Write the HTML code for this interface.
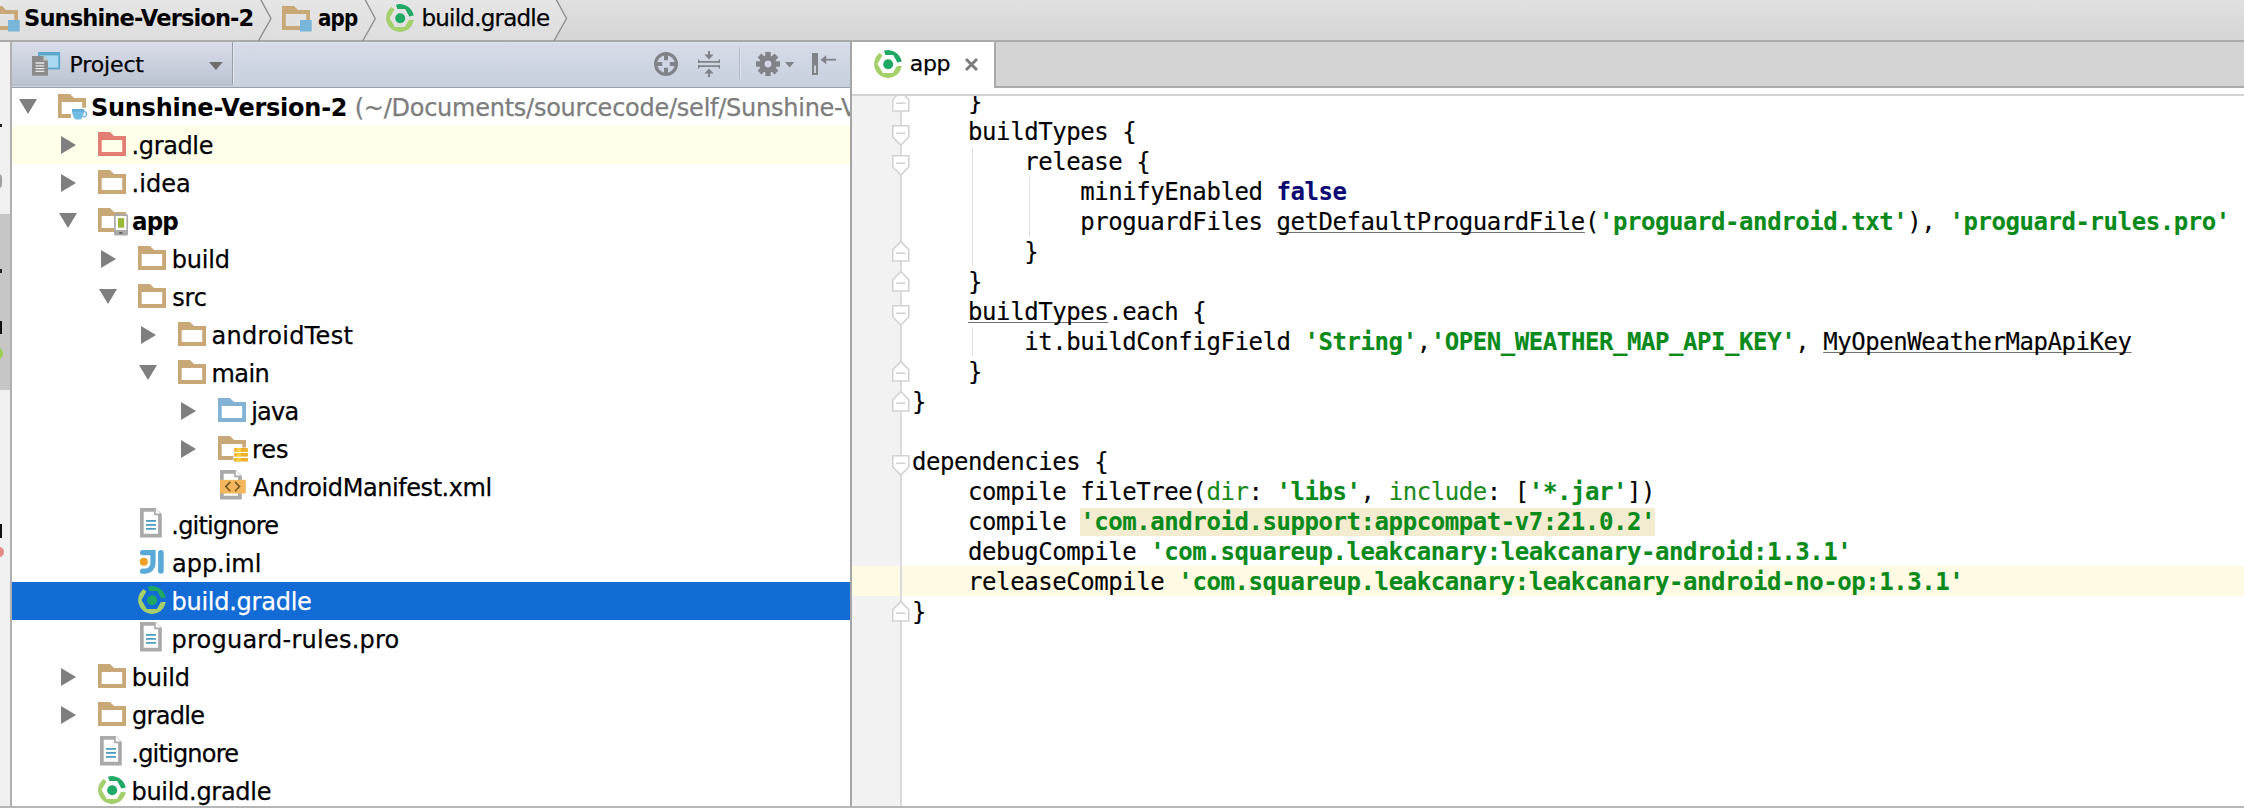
<!DOCTYPE html>
<html><head><meta charset="utf-8"><title>build.gradle</title>
<style>
html,body{margin:0;padding:0}
body{width:2244px;height:808px;overflow:hidden;position:relative;background:#fff;font-family:"DejaVu Sans","Liberation Sans",sans-serif;color:#000;-webkit-text-stroke:0.25px}
.a{position:absolute}
.t{position:absolute;white-space:pre;line-height:38px;height:38px;top:1px}
.b{font-weight:bold;-webkit-text-stroke:0}
svg{position:absolute;overflow:visible}
#crumb{left:0;top:0;width:2244px;height:40px;background:linear-gradient(#e0e0e0,#d5d5d5)}
#crumbline{left:0;top:40px;width:2244px;height:2px;background:#aaaaaa}
#strip{left:0;top:42px;width:10px;height:766px;background:#f0f0f0}
#stripsel{left:0;top:214px;width:10px;height:176px;background:#c6c6c6}
#stripline{left:10px;top:42px;width:2px;height:766px;background:#b0b0b0}
#phead{left:12px;top:42px;width:838px;height:45px;background:linear-gradient(#dbe1ed 0,#d5dbe7 6%,#c8cfdd 100%)}
#pheadline{left:12px;top:87px;width:838px;height:1px;background:#9aa0aa}
#combo{left:12px;top:42px;width:220px;height:42px;background:linear-gradient(#d9dee9,#bcc3d1);border-right:1.5px solid #979ca6;box-shadow:1px 0 0 #e3e7ef, 0 1.5px 0 #b4bac6}
#tree{left:12px;top:88px;width:838px;height:718px;background:#fff;overflow:hidden}
.row{position:absolute;left:0;width:838px;height:38px}
#divider{left:850px;top:42px;width:2px;height:766px;background:#a6a6a6}
#tabbar{left:852px;top:42px;width:1392px;height:44px;background:#d4d4d4}
#tabbarline{left:852px;top:86px;width:1392px;height:2px;background:#a9a9a9}
#tab{left:852px;top:42px;width:142px;height:52px;background:#fff}
#tabsep{left:994px;top:42px;width:2px;height:46px;background:#a9a9a9}
#edtop{left:852px;top:88px;width:1392px;height:6px;background:#fff}
#edline{left:852px;top:94px;width:1392px;height:2px;background:#d2d2d2}
#editor{left:852px;top:96px;width:1392px;height:710px;background:#fff;overflow:hidden}
#gutter{left:0;top:0;width:48px;height:710px;background:#f2f2f2}
#gline{left:48px;top:0;width:2px;height:710px;background:#dadada}
#bottom{left:0;top:806px;width:2244px;height:2px;background:#b6b6b6}
.cl{position:absolute;left:60px;height:30px;line-height:30px;white-space:pre;font-family:"DejaVu Sans Mono","Liberation Mono",monospace;font-size:24px;letter-spacing:-0.431px;color:#000;-webkit-text-stroke:0.15px}
.s{color:#0a8a1a;font-weight:bold}
.k{color:#0a0a72;font-weight:bold}
.n{color:#1a8a1a}
.u{text-decoration:underline;text-decoration-color:#707070;text-decoration-thickness:1.3px;text-underline-offset:2.2px;text-decoration-skip-ink:none}
.hl{background:#f4ecd0}
.guide{position:absolute;width:1.3px;background:#e2e2e2}
</style></head><body>
<div id="crumb" class="a"></div><svg class="a" style="left:0;top:0" width="600" height="40"><path d="M0,0H556L566.5,18.5L554,40H0Z" fill="#fff" opacity=".2"/></svg><div id="crumbline" class="a"></div>
<svg class="a" style="left:-9.6px;top:6.4px" width="28" height="24"><path fill-rule="evenodd" d="M0,0H12L16,4H28V24H0Z M3.7,8H24.2V20H3.7Z" fill="#c9a877"/></svg><svg class="a" style="left:8.2px;top:20.3px" width="12" height="12"><rect width="11.7" height="11.5" fill="#79b5d8"/></svg><span class="a b" style="left:24.24px;font-size:23px;letter-spacing:-0.900px;transform:scaleX(0.9818);transform-origin:0 0;top:0;height:40px;line-height:37px;white-space:pre;">Sunshine-Version-2</span><svg class="a" style="left:282px;top:6.2px" width="28" height="24"><path fill-rule="evenodd" d="M0,0H12L16,4H28V24H0Z M3.7,8H24.2V20H3.7Z" fill="#c9a877"/></svg><svg class="a" style="left:300.3px;top:20px" width="12" height="12"><rect width="11.7" height="11.5" fill="#79b5d8"/></svg><span class="a b" style="left:317.94px;font-size:23px;letter-spacing:-0.900px;transform:scaleX(0.8628);transform-origin:0 0;top:0;height:40px;line-height:37px;white-space:pre;">app</span><svg class="a" style="left:400px;top:17.8px" width="1" height="1"><path d="M-8.5,-11 A13.9,13.9 0 1 0 13.75,2 L9,2 L4.8,9.1 L-5.2,9.1 L-10.5,0 L-5.6,-8.5 Z" fill="#a4cf6b"/><path d="M-4,-13.3 A13.9,13.9 0 0 1 13.7,-2.4 L9.4,-1.6 L5.2,-8.9 L-2.6,-8.9 Z" fill="#1fa866"/><circle cx="0.2" cy="0.2" r="5" fill="#1fa866"/></svg><span class="a" style="left:421.40px;font-size:23px;letter-spacing:-0.764px;top:0;height:40px;line-height:37px;white-space:pre;">build.gradle</span><svg class="a" style="left:0;top:0" width="2244" height="40"><path d="M260.4,-1 L271.0,18.5 L258.4,41" fill="none" stroke="#8e8e8e" stroke-width="1.4"/></svg><svg class="a" style="left:0;top:0" width="2244" height="40"><path d="M364.7,-1 L375.3,18.5 L362.7,41" fill="none" stroke="#8e8e8e" stroke-width="1.4"/></svg><svg class="a" style="left:0;top:0" width="2244" height="40"><path d="M555.9,-1 L566.5,18.5 L553.9,41" fill="none" stroke="#8e8e8e" stroke-width="1.4"/></svg>
<div id="strip" class="a"></div><div id="stripsel" class="a"></div><div id="stripline" class="a"></div><div class="a" style="left:0;top:124px;width:2px;height:3px;background:#222"></div><div class="a" style="left:-5px;top:174px;width:7px;height:14px;border-radius:7px;background:#a0a0a0"></div><div class="a" style="left:0;top:269px;width:2px;height:4px;background:#222"></div><div class="a" style="left:0;top:321px;width:2.2px;height:13px;background:#111"></div><div class="a" style="left:-11px;top:346.5px;width:13.5px;height:13.5px;border-radius:7px;background:#9ccc50"></div><div class="a" style="left:0;top:523.5px;width:2.2px;height:14px;background:#111"></div><div class="a" style="left:-6.5px;top:546.5px;width:10px;height:10px;border-radius:5px;background:#e48a84"></div>
<div id="phead" class="a"></div><div id="pheadline" class="a"></div><div id="combo" class="a"></div>
<svg class="a" style="left:31.9px;top:52px" width="30" height="25">
<rect x="6.1" y="0" width="22" height="17.4" fill="#5ba6c9"/><rect x="8" y="3.4" width="18.3" height="12.2" fill="#a9d9f0"/>
<path d="M0,4H11.5L16,8.5V23.8H0Z" fill="#8b8b8b"/><path d="M11.5,4V8.5H16Z" fill="#c9c9c9"/>
<path d="M3.6,11H12.3M3.6,13.8H12.3M3.6,16.6H12.3M3.6,19.4H12.3" stroke="#e8e8e8" stroke-width="1.3"/>
</svg><span class="a" style="left:69.50px;font-size:22px;letter-spacing:-0.133px;top:42px;height:44px;line-height:45px;">Project</span><svg class="a" style="left:209px;top:62px" width="14" height="8"><path d="M0,0H13.8L6.9,8Z" fill="#6e6e6e"/></svg><svg class="a" style="left:654px;top:52px" width="24" height="24">
<circle cx="12" cy="12" r="10.4" fill="none" stroke="#7f8286" stroke-width="3.2"/>
<path d="M12,1V8.2M12,15.8V23M1,12H8.2M15.8,12H23" stroke="#7f8286" stroke-width="4"/></svg><svg class="a" style="left:698px;top:51px" width="22" height="26">
<path d="M0,10.8H22M0,15.2H22" stroke="#7f8286" stroke-width="1.8"/>
<path d="M0.7,8.6V12M21.3,8.6V12M0.7,14V17.4M21.3,14V17.4" stroke="#7f8286" stroke-width="1.4"/>
<path d="M11,0V7M11,26V19" stroke="#7f8286" stroke-width="2"/>
<path d="M6.4,3.6L11,8.4L15.6,3.6Z M6.4,22.4L11,17.6L15.6,22.4Z" fill="#7f8286"/></svg><div class="a" style="left:738.6px;top:47px;width:1.4px;height:32px;background:#b3bac8"></div><div class="a" style="left:740px;top:47px;width:1.4px;height:32px;background:#dde2ec"></div><svg class="a" style="left:768px;top:64px" width="1" height="1"><g fill="#7f8286"><rect x="-2.7" y="-12" width="5.4" height="7" transform="rotate(0)"/><rect x="-2.7" y="-12" width="5.4" height="7" transform="rotate(45)"/><rect x="-2.7" y="-12" width="5.4" height="7" transform="rotate(90)"/><rect x="-2.7" y="-12" width="5.4" height="7" transform="rotate(135)"/><rect x="-2.7" y="-12" width="5.4" height="7" transform="rotate(180)"/><rect x="-2.7" y="-12" width="5.4" height="7" transform="rotate(225)"/><rect x="-2.7" y="-12" width="5.4" height="7" transform="rotate(270)"/><rect x="-2.7" y="-12" width="5.4" height="7" transform="rotate(315)"/><path fill-rule="evenodd" d="M0,-8.6A8.6,8.6 0 1 0 0,8.6A8.6,8.6 0 1 0 0,-8.6Z M0,-3.4A3.4,3.4 0 1 1 0,3.4A3.4,3.4 0 1 1 0,-3.4Z"/></g></svg><svg class="a" style="left:784.7px;top:62.2px" width="10" height="6"><path d="M0,0H9.2L4.6,5.4Z" fill="#7f8286"/></svg><svg class="a" style="left:812px;top:53px" width="25" height="22">
<rect x="0" y="0" width="6" height="22" fill="#7f8286"/><rect x="2" y="12.5" width="2" height="7.5" fill="#c9d0dc"/>
<path d="M8.5,6.7L14.2,2.2V11.2Z" fill="#7f8286"/><path d="M13,6.7H24" stroke="#7f8286" stroke-width="1.8"/></svg>
<div id="tree" class="a">
<div class="row" style="top:0px;"><svg style="left:7.2px;top:11.2px" width="18" height="15"><path d="M0,0H18L9,15Z" fill="#7f7f7f"/></svg><svg style="left:46px;top:6.1px" width="32" height="27">
<path fill="#c9a877" fill-rule="evenodd" d="M0,0H12L16,4H28V13.8H24.2V8H3.7V20H13V24H0Z"/>
<path d="M14,15.2H26.2C26.2,21 24.5,23.5 22.6,25.6H17.6C15.7,23.5 14,21 14,15.2Z" fill="#74bbe3"/>
<rect x="14" y="15.2" width="12.2" height="2.2" fill="#5aa9d6"/>
<path d="M26,17.6A2.6,2.6 0 1 1 25,22.6" fill="none" stroke="#74bbe3" stroke-width="1.5"/></svg><span class="t b" style="left:78.90px;font-size:24px;letter-spacing:-0.241px;">Sunshine-Version-2</span><span class="t" style="left:342.70px;font-size:24px;letter-spacing:-0.249px;color:#7d7d7d;">(~/Documents/sourcecode/self/Sunshine-Version-2)</span></div>
<div class="row" style="top:38px;background:#ffffea;"><svg style="left:49.0px;top:9.6px" width="15" height="18"><path d="M0,0L15,9L0,18Z" fill="#7f7f7f"/></svg><svg style="left:86px;top:6.1px" width="28" height="24"><path fill-rule="evenodd" d="M0,0H12L16,4H28V24H0Z M3.7,8H24.2V20H3.7Z" fill="#e47d74"/></svg><span class="t" style="left:119.50px;font-size:24px;letter-spacing:-0.367px;">.gradle</span></div>
<div class="row" style="top:76px;"><svg style="left:49.0px;top:9.6px" width="15" height="18"><path d="M0,0L15,9L0,18Z" fill="#7f7f7f"/></svg><svg style="left:86px;top:6.1px" width="28" height="24"><path fill-rule="evenodd" d="M0,0H12L16,4H28V24H0Z M3.7,8H24.2V20H3.7Z" fill="#c9a877"/></svg><span class="t" style="left:119.50px;font-size:24px;letter-spacing:0.050px;">.idea</span></div>
<div class="row" style="top:114px;"><svg style="left:47.2px;top:11.2px" width="18" height="15"><path d="M0,0H18L9,15Z" fill="#7f7f7f"/></svg><svg style="left:86px;top:6.1px" width="32" height="28">
<path fill="#c9a877" fill-rule="evenodd" d="M0,0H12L16,4H28V7H16V24H0Z M3.7,8V20H16V8Z"/>
<rect x="16" y="6" width="14" height="21.6" rx="1.6" fill="#a9a9a9"/><rect x="17.7" y="8" width="10.7" height="14" fill="#fff"/>
<rect x="20" y="10.1" width="6.2" height="9.6" fill="#9ab83a"/><rect x="21.2" y="24.2" width="3.2" height="1.5" fill="#555"/></svg><span class="t b" style="left:120.04px;font-size:24px;letter-spacing:-0.900px;transform:scaleX(0.9567);transform-origin:0 0;">app</span></div>
<div class="row" style="top:152px;"><svg style="left:89.0px;top:9.6px" width="15" height="18"><path d="M0,0L15,9L0,18Z" fill="#7f7f7f"/></svg><svg style="left:126px;top:6.1px" width="28" height="24"><path fill-rule="evenodd" d="M0,0H12L16,4H28V24H0Z M3.7,8H24.2V20H3.7Z" fill="#c9a877"/></svg><span class="t" style="left:159.80px;font-size:24px;letter-spacing:-0.200px;">build</span></div>
<div class="row" style="top:190px;"><svg style="left:87.2px;top:11.2px" width="18" height="15"><path d="M0,0H18L9,15Z" fill="#7f7f7f"/></svg><svg style="left:126px;top:6.1px" width="28" height="24"><path fill-rule="evenodd" d="M0,0H12L16,4H28V24H0Z M3.7,8H24.2V20H3.7Z" fill="#c9a877"/></svg><span class="t" style="left:160.30px;font-size:24px;letter-spacing:-0.200px;">src</span></div>
<div class="row" style="top:228px;"><svg style="left:129.0px;top:9.6px" width="15" height="18"><path d="M0,0L15,9L0,18Z" fill="#7f7f7f"/></svg><svg style="left:166px;top:6.1px" width="28" height="24"><path fill-rule="evenodd" d="M0,0H12L16,4H28V24H0Z M3.7,8H24.2V20H3.7Z" fill="#c9a877"/></svg><span class="t" style="left:199.60px;font-size:24px;letter-spacing:0.290px;">androidTest</span></div>
<div class="row" style="top:266px;"><svg style="left:127.2px;top:11.2px" width="18" height="15"><path d="M0,0H18L9,15Z" fill="#7f7f7f"/></svg><svg style="left:166px;top:6.1px" width="28" height="24"><path fill-rule="evenodd" d="M0,0H12L16,4H28V24H0Z M3.7,8H24.2V20H3.7Z" fill="#c9a877"/></svg><span class="t" style="left:199.60px;font-size:24px;letter-spacing:-0.600px;">main</span></div>
<div class="row" style="top:304px;"><svg style="left:169.0px;top:9.6px" width="15" height="18"><path d="M0,0L15,9L0,18Z" fill="#7f7f7f"/></svg><svg style="left:206px;top:6.1px" width="28" height="24"><path fill-rule="evenodd" d="M0,0H12L16,4H28V24H0Z M3.7,8H24.2V20H3.7Z" fill="#82b3d4"/></svg><span class="t" style="left:239.20px;font-size:24px;letter-spacing:-0.767px;">java</span></div>
<div class="row" style="top:342px;"><svg style="left:169.0px;top:9.6px" width="15" height="18"><path d="M0,0L15,9L0,18Z" fill="#7f7f7f"/></svg><svg style="left:206px;top:6.1px" width="32" height="28">
<path fill="#c9a877" fill-rule="evenodd" d="M0,0H12L16,4H28V11.5H24.2V8H3.7V20H15.5V24H0Z"/>
<g><rect x="16" y="12" width="14" height="3.9" rx="1.2" fill="#eeb02a"/><rect x="16" y="16.9" width="14" height="3.9" rx="1.2" fill="#eeb02a"/><rect x="16" y="21.7" width="14" height="3.9" rx="1.2" fill="#eeb02a"/>
<rect x="18.5" y="12" width="4.5" height="13.6" fill="#f8d548" opacity=".75"/><path d="M16,16.4H30M16,21.3H30" stroke="#fff" stroke-width="1"/></g></svg><span class="t" style="left:240.00px;font-size:24px;letter-spacing:-0.100px;">res</span></div>
<div class="row" style="top:380px;"><svg style="left:208.15px;top:2.2px" width="28" height="30"><path fill="#aaaaaa" fill-rule="evenodd" d="M0,0H15.8L21.8,6V29.5H0Z M3.7,3.7V25.8H18.1V7.2H14.1V3.7Z M15.8,0.6V5.4H20.6Z"/>
<rect x="0" y="9.9" width="25.8" height="13.6" fill="#f3b65c"/>
<path d="M10.3,11.9L5.8,16.6L10.3,21.3M15,11.9L19.5,16.6L15,21.3" fill="none" stroke="#7b5a22" stroke-width="1.6"/></svg><span class="t" style="left:240.90px;font-size:24px;letter-spacing:-0.433px;">AndroidManifest.xml</span></div>
<div class="row" style="top:418px;"><svg style="left:128.15px;top:2.2px" width="22" height="30"><path fill="#aaaaaa" fill-rule="evenodd" d="M0,0H15.8L21.8,6V29.5H0Z M3.7,3.7V25.8H18.1V7.2H14.1V3.7Z M15.8,0.6V5.4H20.6Z"/>
<path d="M6,12.8H15.9M6,16.8H15.9M6,20.8H15.9" stroke="#4b9cc1" stroke-width="1.8"/></svg><span class="t" style="left:159.30px;font-size:24px;letter-spacing:-0.800px;">.gitignore</span></div>
<div class="row" style="top:456px;"><svg style="left:128.15px;top:6.2px" width="24" height="24">
<path d="M2.6,2.6H13V13.5A7.8,7.8 0 0 1 5.2,21.2H2.6" fill="none" stroke="#5aaad8" stroke-width="5.2" stroke-linecap="round" stroke-linejoin="miter"/>
<path d="M20.9,2.8V21" stroke="#5aaad8" stroke-width="5.6" stroke-linecap="round"/>
<circle cx="3.8" cy="11.8" r="4" fill="#f0a024"/></svg><span class="t" style="left:160.00px;font-size:24px;letter-spacing:-0.033px;">app.iml</span></div>
<div class="row" style="top:494px;background:#136bd6;"><svg style="left:139.8px;top:18px" width="1" height="1"><path d="M-8.5,-11 A13.9,13.9 0 1 0 13.75,2 L9,2 L4.8,9.1 L-5.2,9.1 L-10.5,0 L-5.6,-8.5 Z" fill="#a4cf6b"/><path d="M-4,-13.3 A13.9,13.9 0 0 1 13.7,-2.4 L9.4,-1.6 L5.2,-8.9 L-2.6,-8.9 Z" fill="#1fa866"/><circle cx="0.2" cy="0.2" r="5" fill="#1fa866"/></svg><span class="t" style="left:159.50px;font-size:24px;letter-spacing:-0.255px;color:#fff;">build.gradle</span></div>
<div class="row" style="top:532px;"><svg style="left:128.15px;top:2.2px" width="22" height="30"><path fill="#aaaaaa" fill-rule="evenodd" d="M0,0H15.8L21.8,6V29.5H0Z M3.7,3.7V25.8H18.1V7.2H14.1V3.7Z M15.8,0.6V5.4H20.6Z"/>
<path d="M6,12.8H15.9M6,16.8H15.9M6,20.8H15.9" stroke="#4b9cc1" stroke-width="1.8"/></svg><span class="t" style="left:159.50px;font-size:24px;letter-spacing:0.241px;">proguard-rules.pro</span></div>
<div class="row" style="top:570px;"><svg style="left:49.0px;top:9.6px" width="15" height="18"><path d="M0,0L15,9L0,18Z" fill="#7f7f7f"/></svg><svg style="left:86px;top:6.1px" width="28" height="24"><path fill-rule="evenodd" d="M0,0H12L16,4H28V24H0Z M3.7,8H24.2V20H3.7Z" fill="#c9a877"/></svg><span class="t" style="left:119.80px;font-size:24px;letter-spacing:-0.225px;">build</span></div>
<div class="row" style="top:608px;"><svg style="left:49.0px;top:9.6px" width="15" height="18"><path d="M0,0L15,9L0,18Z" fill="#7f7f7f"/></svg><svg style="left:86px;top:6.1px" width="28" height="24"><path fill-rule="evenodd" d="M0,0H12L16,4H28V24H0Z M3.7,8H24.2V20H3.7Z" fill="#c9a877"/></svg><span class="t" style="left:119.90px;font-size:24px;letter-spacing:-0.660px;">gradle</span></div>
<div class="row" style="top:646px;"><svg style="left:88.15px;top:2.2px" width="22" height="30"><path fill="#aaaaaa" fill-rule="evenodd" d="M0,0H15.8L21.8,6V29.5H0Z M3.7,3.7V25.8H18.1V7.2H14.1V3.7Z M15.8,0.6V5.4H20.6Z"/>
<path d="M6,12.8H15.9M6,16.8H15.9M6,20.8H15.9" stroke="#4b9cc1" stroke-width="1.8"/></svg><span class="t" style="left:119.30px;font-size:24px;letter-spacing:-0.800px;">.gitignore</span></div>
<div class="row" style="top:684px;"><svg style="left:99.8px;top:18px" width="1" height="1"><path d="M-8.5,-11 A13.9,13.9 0 1 0 13.75,2 L9,2 L4.8,9.1 L-5.2,9.1 L-10.5,0 L-5.6,-8.5 Z" fill="#a4cf6b"/><path d="M-4,-13.3 A13.9,13.9 0 0 1 13.7,-2.4 L9.4,-1.6 L5.2,-8.9 L-2.6,-8.9 Z" fill="#1fa866"/><circle cx="0.2" cy="0.2" r="5" fill="#1fa866"/></svg><span class="t" style="left:119.50px;font-size:24px;letter-spacing:-0.291px;">build.gradle</span></div>
</div>
<div id="divider" class="a"></div>
<div id="tabbar" class="a"></div><div id="tabbarline" class="a"></div><div id="edtop" class="a"></div><div id="edline" class="a"></div><div id="tab" class="a"></div><div id="tabsep" class="a"></div>
<svg class="a" style="left:888px;top:63.7px" width="1" height="1"><path d="M-8.5,-11 A13.9,13.9 0 1 0 13.75,2 L9,2 L4.8,9.1 L-5.2,9.1 L-10.5,0 L-5.6,-8.5 Z" fill="#a4cf6b"/><path d="M-4,-13.3 A13.9,13.9 0 0 1 13.7,-2.4 L9.4,-1.6 L5.2,-8.9 L-2.6,-8.9 Z" fill="#1fa866"/><circle cx="0.2" cy="0.2" r="5" fill="#1fa866"/></svg><span class="a" style="left:909.80px;font-size:22px;letter-spacing:-0.400px;top:42px;height:44px;line-height:44px;">app</span><svg class="a" style="left:965px;top:57.5px" width="13" height="13"><path d="M1,1L12,12M12,1L1,12" stroke="#7d7d7d" stroke-width="3"/></svg>
<div id="editor" class="a">
<div id="gutter" class="a"></div><div class="a" style="left:0;top:470px;width:1392px;height:30px;background:#fffae3"></div><div id="gline" class="a"></div>
<div class="guide" style="left:120.2px;top:50.5px;height:119.5px"></div><div class="guide" style="left:176.6px;top:80.5px;height:60.0px"></div><div class="guide" style="left:120.2px;top:230.5px;height:29.5px"></div><div class="cl" style="top:-9.0px">    }</div>
<div class="cl" style="top:21.0px">    buildTypes {</div>
<div class="cl" style="top:51.0px">        release {</div>
<div class="cl" style="top:81.0px">            minifyEnabled <span class="k">false</span></div>
<div class="cl" style="top:111.0px">            proguardFiles <span class="u">getDefaultProguardFile</span>(<span class="s">&#x27;proguard-android.txt&#x27;</span>), <span class="s">&#x27;proguard-rules.pro&#x27;</span></div>
<div class="cl" style="top:141.0px">        }</div>
<div class="cl" style="top:171.0px">    }</div>
<div class="cl" style="top:201.0px">    <span class="u">buildTypes</span>.each {</div>
<div class="cl" style="top:231.0px">        it.buildConfigField <span class="s">&#x27;String&#x27;</span>,<span class="s">&#x27;OPEN_WEATHER_MAP_API_KEY&#x27;</span>, <span class="u">MyOpenWeatherMapApiKey</span></div>
<div class="cl" style="top:261.0px">    }</div>
<div class="cl" style="top:291.0px">}</div>
<div class="cl" style="top:321.0px"></div>
<div class="cl" style="top:351.0px">dependencies {</div>
<div class="cl" style="top:381.0px">    compile fileTree(<span class="n">dir</span>: <span class="s">&#x27;libs&#x27;</span>, <span class="n">include</span>: [<span class="s">&#x27;*.jar&#x27;</span>])</div>
<div class="cl" style="top:411.0px">    compile <span class="s hl">&#x27;com.android.support:appcompat-v7:21.0.2&#x27;</span></div>
<div class="cl" style="top:441.0px">    debugCompile <span class="s">&#x27;com.squareup.leakcanary:leakcanary-android:1.3.1&#x27;</span></div>
<div class="cl" style="top:471.0px">    releaseCompile <span class="s">&#x27;com.squareup.leakcanary:leakcanary-android-no-op:1.3.1&#x27;</span></div>
<div class="cl" style="top:501.0px">}</div>
<svg style="left:40.2px;top:28.5px" width="18" height="21"><path d="M0.8,0.8H16.8V12L8.8,20L0.8,12Z" fill="#fff" stroke="#d2d2d2" stroke-width="1.6"/><path d="M4.2,8.3H13.4" stroke="#d2d2d2" stroke-width="1.6"/></svg><svg style="left:40.2px;top:58.5px" width="18" height="21"><path d="M0.8,0.8H16.8V12L8.8,20L0.8,12Z" fill="#fff" stroke="#d2d2d2" stroke-width="1.6"/><path d="M4.2,8.3H13.4" stroke="#d2d2d2" stroke-width="1.6"/></svg><svg style="left:40.2px;top:208.5px" width="18" height="21"><path d="M0.8,0.8H16.8V12L8.8,20L0.8,12Z" fill="#fff" stroke="#d2d2d2" stroke-width="1.6"/><path d="M4.2,8.3H13.4" stroke="#d2d2d2" stroke-width="1.6"/></svg><svg style="left:40.2px;top:358.5px" width="18" height="21"><path d="M0.8,0.8H16.8V12L8.8,20L0.8,12Z" fill="#fff" stroke="#d2d2d2" stroke-width="1.6"/><path d="M4.2,8.3H13.4" stroke="#d2d2d2" stroke-width="1.6"/></svg><svg style="left:40.2px;top:-5.2px" width="18" height="21"><path d="M0.8,20H16.8V8.6L8.8,0.6L0.8,8.6Z" fill="#fff" stroke="#d2d2d2" stroke-width="1.6"/><path d="M4.2,12.2H13.4" stroke="#d2d2d2" stroke-width="1.6"/></svg><svg style="left:40.2px;top:144.8px" width="18" height="21"><path d="M0.8,20H16.8V8.6L8.8,0.6L0.8,8.6Z" fill="#fff" stroke="#d2d2d2" stroke-width="1.6"/><path d="M4.2,12.2H13.4" stroke="#d2d2d2" stroke-width="1.6"/></svg><svg style="left:40.2px;top:174.8px" width="18" height="21"><path d="M0.8,20H16.8V8.6L8.8,0.6L0.8,8.6Z" fill="#fff" stroke="#d2d2d2" stroke-width="1.6"/><path d="M4.2,12.2H13.4" stroke="#d2d2d2" stroke-width="1.6"/></svg><svg style="left:40.2px;top:264.8px" width="18" height="21"><path d="M0.8,20H16.8V8.6L8.8,0.6L0.8,8.6Z" fill="#fff" stroke="#d2d2d2" stroke-width="1.6"/><path d="M4.2,12.2H13.4" stroke="#d2d2d2" stroke-width="1.6"/></svg><svg style="left:40.2px;top:294.8px" width="18" height="21"><path d="M0.8,20H16.8V8.6L8.8,0.6L0.8,8.6Z" fill="#fff" stroke="#d2d2d2" stroke-width="1.6"/><path d="M4.2,12.2H13.4" stroke="#d2d2d2" stroke-width="1.6"/></svg><svg style="left:40.2px;top:504.8px" width="18" height="21"><path d="M0.8,20H16.8V8.6L8.8,0.6L0.8,8.6Z" fill="#fff" stroke="#d2d2d2" stroke-width="1.6"/><path d="M4.2,12.2H13.4" stroke="#d2d2d2" stroke-width="1.6"/></svg></div>
<div id="bottom" class="a"></div>
</body></html>
